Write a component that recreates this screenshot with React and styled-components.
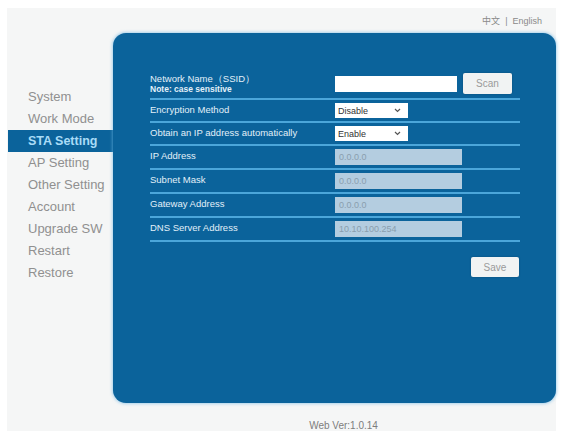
import React from 'react';
import styled, { createGlobalStyle } from 'styled-components';

const GlobalStyle = createGlobalStyle`
  html, body {
    margin: 0;
    padding: 0;
    background: #ffffff;
    font-family: "Liberation Sans", Arial, sans-serif;
  }
`;

const Page = styled.div`
  margin: 8px 6px 0 7px;
  height: 423px;
  background: #f5f6f6;
  display: flex;
  flex-direction: column;
`;

const LangBar = styled.div`
  height: 25px;
  display: flex;
  align-items: center;
  justify-content: flex-end;
  padding-right: 14px;
  font-size: 9px;
  color: #8a8a8a;
  font-family: "Liberation Sans", "Noto Sans CJK SC", sans-serif;

  span {
    margin: 0 5px;
  }
`;

const Body = styled.div`
  display: flex;
  align-items: flex-start;
`;

const Sidebar = styled.ul`
  list-style: none;
  margin: 0;
  padding: 53px 0 0 0;
  width: 106px;
`;

const NavItem = styled.li`
  height: 22px;
  line-height: 22px;
  padding-left: 20px;
  font-size: ${p => (p.$active ? '12.5px' : '13px')};
  font-weight: ${p => (p.$active ? 'bold' : 'normal')};
  color: ${p => (p.$active ? '#a9dcf7' : '#909090')};
  background: ${p => (p.$active ? '#0b639b' : 'transparent')};
  margin-left: 1px;
  white-space: nowrap;
`;

const Main = styled.div`
  flex: 1;
  display: flex;
  flex-direction: column;
`;

const Panel = styled.div`
  height: 370px;
  box-sizing: border-box;
  background: #0b639b;
  border-radius: 13px;
  box-shadow: 0 0 3px 1px rgba(110, 180, 225, 0.55);
  padding: 36px 36px 0 37px;
`;

const Row = styled.div`
  display: grid;
  grid-template-columns: 185px 1fr;
  align-items: ${p => (p.$top ? 'center' : 'start')};
  min-height: 22px;
  padding: 3px 0 3px;
  box-sizing: border-box;
  border-bottom: 2px solid #4ba6da;
`;

const Label = styled.div`
  font-size: 9.5px;
  line-height: 11px;
  color: #e2f0f9;
  padding-top: 1px;

  small {
    display: block;
    font-size: 8.5px;
    font-weight: bold;
  }
`;

const Field = styled.div`
  display: flex;
  align-items: center;
  gap: 6px;
`;

const TextInput = styled.div`
  width: ${p => p.$w}px;
  height: 16px;
  box-sizing: border-box;
  background: ${p => (p.$disabled ? '#b4cde0' : '#ffffff')};
  color: #8a9eae;
  font-size: 9px;
  line-height: 16px;
  padding-left: 4px;
`;

const Select = styled.div`
  width: 73px;
  height: 15px;
  box-sizing: border-box;
  background: #ffffff;
  color: #333;
  font-size: 9px;
  display: flex;
  align-items: center;
  justify-content: space-between;
  padding: 0 7px 0 3px;
`;

const Button = styled.div`
  width: ${p => p.$w}px;
  height: ${p => p.$h}px;
  display: flex;
  align-items: center;
  justify-content: center;
  background: #f1f3f3;
  color: #9a9a9a;
  font-size: 10px;
  border-radius: 2px;
  box-shadow: 0 0 2px rgba(0, 0, 0, 0.25);
`;

const Actions = styled.div`
  display: flex;
  justify-content: flex-end;
  padding-top: 15px;
  margin-right: 1px;
`;

const Footer = styled.div`
  text-align: center;
  padding: 17px 0 0 18px;
  font-size: 10px;
  color: #7d7d7d;
`;

const Chevron = () => (
  <svg width="7" height="5" viewBox="0 0 7 5">
    <path d="M1 1 L3.5 3.5 L6 1" fill="none" stroke="#555" strokeWidth="1.2" />
  </svg>
);

const menu = ['System', 'Work Mode', 'STA Setting', 'AP Setting', 'Other Setting', 'Account', 'Upgrade SW', 'Restart', 'Restore'];

const addressRows = [
  ['IP Address', '0.0.0.0'],
  ['Subnet Mask', '0.0.0.0'],
  ['Gateway Address', '0.0.0.0'],
  ['DNS Server Address', '10.10.100.254'],
];

export default function App() {
  return (
    <>
      <GlobalStyle />
      <Page>
        <LangBar>中文<span>|</span>English</LangBar>
        <Body>
          <Sidebar>
            {menu.map(m => (
              <NavItem key={m} $active={m === 'STA Setting'}>{m}</NavItem>
            ))}
          </Sidebar>
          <Main>
            <Panel>
              <Row $top>
                <Label>
                  Network Name（SSID）
                  <small>Note: case sensitive</small>
                </Label>
                <Field>
                  <TextInput $w={122} />
                  <Button $w={49} $h={21}>Scan</Button>
                </Field>
              </Row>
              <Row>
                <Label>Encryption Method</Label>
                <Field>
                  <Select>Disable<Chevron /></Select>
                </Field>
              </Row>
              <Row>
                <Label>Obtain an IP address automatically</Label>
                <Field>
                  <Select>Enable<Chevron /></Select>
                </Field>
              </Row>
              {addressRows.map(([label, value]) => (
                <Row key={label}>
                  <Label>{label}</Label>
                  <Field>
                    <TextInput $w={127} $disabled>{value}</TextInput>
                  </Field>
                </Row>
              ))}
              <Actions>
                <Button $w={48} $h={20}>Save</Button>
              </Actions>
            </Panel>
            <Footer>Web Ver:1.0.14</Footer>
          </Main>
        </Body>
      </Page>
    </>
  );
}
